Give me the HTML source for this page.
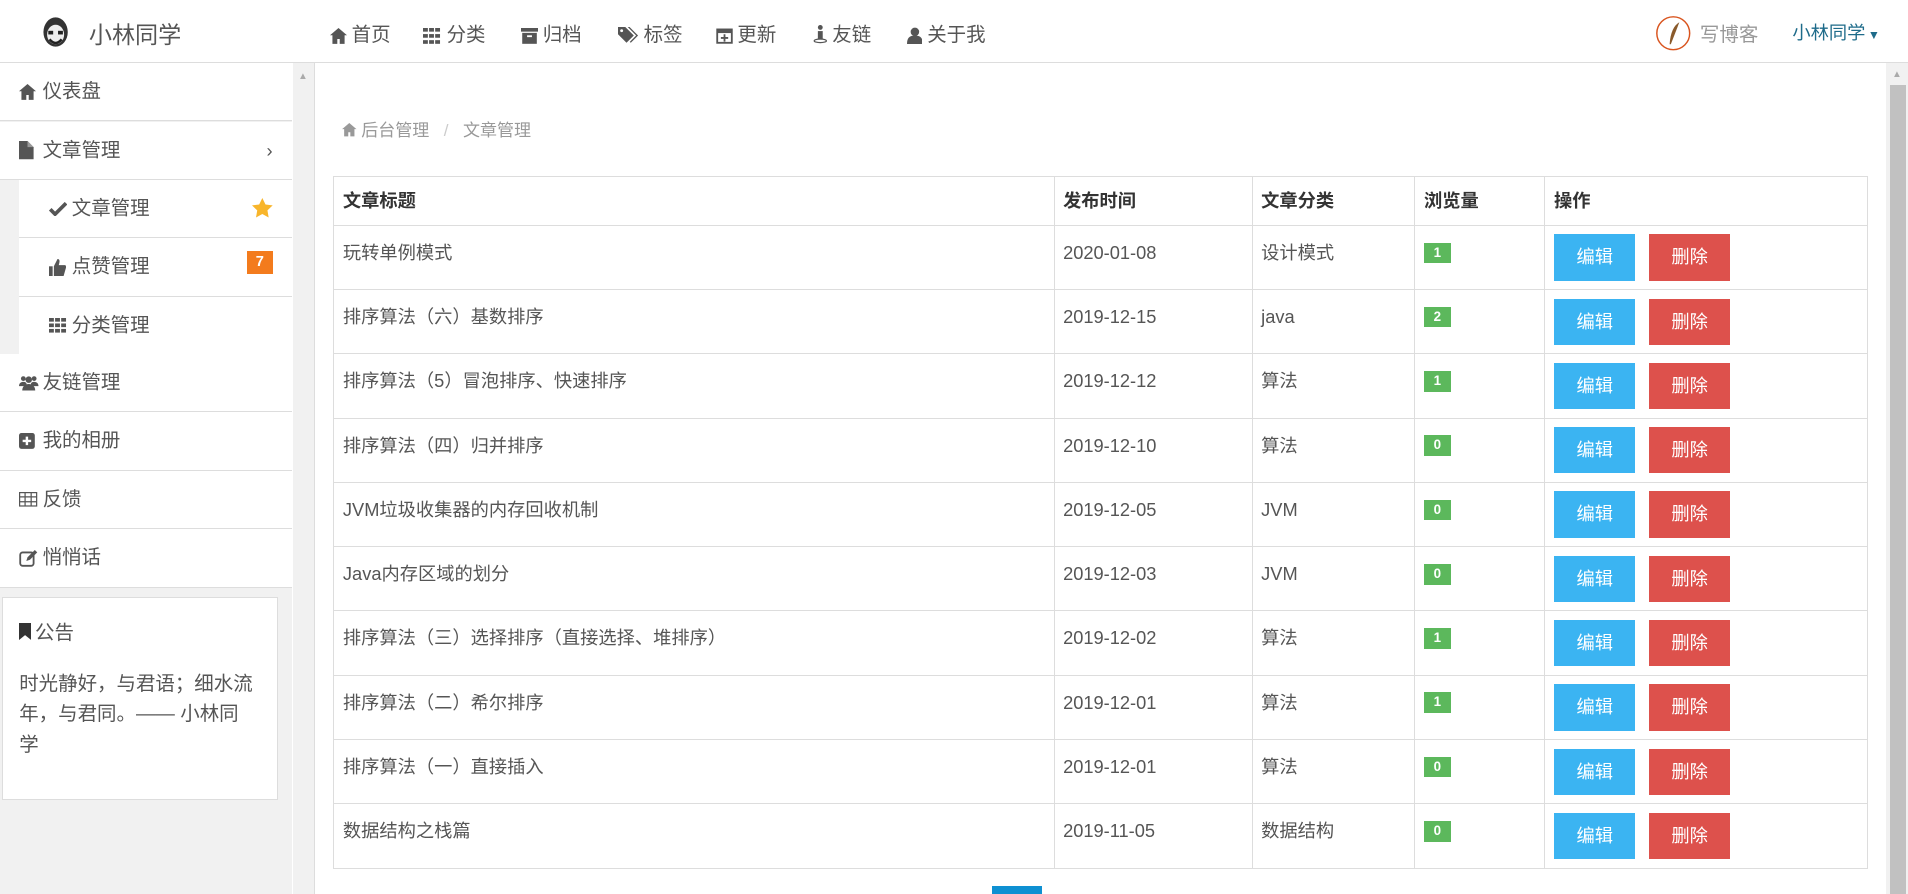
<!DOCTYPE html>
<html><head><meta charset="utf-8">
<style>
html,body{margin:0;padding:0;overflow:hidden;}
body{width:1908px;height:894px;background:#fff;}
#w{zoom:1.21684;width:1568px;height:735px;position:relative;overflow:hidden;font-family:"Liberation Sans","Noto Sans CJK SC",sans-serif;color:#555;}
.a{position:absolute;}
.hdr{left:0;top:0;width:1568px;height:51px;border-bottom:1px solid #ddd;background:#fff;}
.nav{top:15px;font-size:16px;color:#555;white-space:nowrap;}
.nav svg{vertical-align:-2px;margin-right:4px;}
.side{left:0;top:52px;width:240px;height:683px;background:#f1f1f1;}
.it{position:absolute;left:0;width:240px;height:47px;border-bottom:1px solid #ddd;background:#fff;font-size:16px;line-height:47px;white-space:nowrap;}
.ic{display:inline-block;width:19px;margin-left:16px;vertical-align:middle;line-height:0;}
.ic svg{vertical-align:middle;}
.it .t{vertical-align:middle;}
.sub{left:16px;width:224px;}
.sub .ic{margin-left:24px;}
.main{left:258px;top:52px;width:1292px;height:683px;border-left:1px solid #ddd;background:#fff;}
table{position:absolute;left:274px;top:145px;border-collapse:collapse;font-size:15px;color:#555;}
td,th{border:1px solid #ddd;padding:0 7px;text-align:left;vertical-align:top;}
th{height:39px;line-height:39px;font-weight:bold;color:#333;}
td{height:52px;line-height:44px;}
.bd{display:inline-block;background:#5cb85c;color:#fff;font-size:11px;font-weight:bold;width:22px;height:17px;line-height:17px;text-align:center;vertical-align:middle;margin-top:-2px;}
.b{display:inline-block;width:67px;height:38px;line-height:38px;text-align:center;color:#fff;font-size:15px;margin-top:7px;}
.e{background:#3bb4f2;}.d{background:#dd514c;margin-left:11px;}
</style></head><body><div id="w">
<div class="a hdr">
 <svg class="a" style="left:34px;top:12px" width="24" height="28" viewBox="0 0 24 28"><ellipse cx="12" cy="14" rx="10" ry="12" fill="#333"/><ellipse cx="12" cy="16" rx="7" ry="8" fill="#eee"/><rect x="6" y="13" width="4" height="3" fill="#222"/><rect x="14" y="13" width="4" height="3" fill="#222"/><path d="M7 20 Q12 26 17 20" stroke="#222" stroke-width="2" fill="none"/></svg>
 <div class="a" style="left:73px;top:13px;font-size:19px;color:#555">小林同学</div>
 <div class="a nav" style="left:271px"><svg width="14" height="13" viewBox="0 0 14 13"><path d="M7 0L0 6h2v7h4V9h2v4h4V6h2z" fill="#555"/></svg>首页</div>
 <div class="a nav" style="left:348px"><svg width="15" height="13" viewBox="0 0 15 13"><g fill="#555"><rect x="0" y="0" width="4" height="3"/><rect x="5" y="0" width="4" height="3"/><rect x="10" y="0" width="4" height="3"/><rect x="0" y="5" width="4" height="3"/><rect x="5" y="5" width="4" height="3"/><rect x="10" y="5" width="4" height="3"/><rect x="0" y="10" width="4" height="3"/><rect x="5" y="10" width="4" height="3"/><rect x="10" y="10" width="4" height="3"/></g></svg>分类</div>
 <div class="a nav" style="left:428px"><svg width="14" height="13" viewBox="0 0 14 13"><rect x="0" y="0" width="14" height="3" fill="#555"/><rect x="1" y="4" width="12" height="9" fill="#555"/><rect x="5" y="6" width="4" height="1.5" fill="#fff"/></svg>归档</div>
 <div class="a nav" style="left:508px"><svg width="17" height="14" viewBox="0 0 17 14"><path d="M0 0h6l7 7-6 6-7-7z" fill="#555"/><circle cx="3" cy="3" r="1.2" fill="#fff"/><path d="M8 0h1.5l7 7-6 6-.8-.8 5.2-5.2z" fill="#555"/></svg>标签</div>
 <div class="a nav" style="left:588px"><svg width="14" height="14" viewBox="0 0 14 14"><rect x="1" y="2" width="12" height="11" fill="none" stroke="#555" stroke-width="1.5"/><rect x="1" y="2" width="12" height="3" fill="#555"/><path d="M7 6v6M4 9h6" stroke="#555" stroke-width="1.5"/></svg>更新</div>
 <div class="a nav" style="left:668px"><svg width="12" height="15" viewBox="0 0 12 15"><circle cx="6" cy="2" r="2" fill="#555"/><rect x="4" y="5" width="4" height="7" fill="#555"/><ellipse cx="6" cy="13" rx="5" ry="1.5" fill="none" stroke="#555"/></svg>友链</div>
 <div class="a nav" style="left:745px"><svg width="13" height="14" viewBox="0 0 13 14"><circle cx="6.5" cy="4" r="3.5" fill="#555"/><path d="M0 14c0-5 2-7 6.5-7S13 9 13 14z" fill="#555"/></svg>关于我</div>
 <svg class="a" style="left:1360px;top:12px" width="30" height="30" viewBox="0 0 30 30"><circle cx="15" cy="15" r="13.5" fill="#fff" stroke="#d9541e" stroke-width="1.2"/><path d="M12 24 Q13 10 20 6 Q17 14 13 24z" fill="#8a5a2b"/></svg>
 <div class="a" style="left:1397px;top:15px;font-size:16px;color:#999">写博客</div>
 <div class="a" style="left:1473px;top:16px;font-size:15px;color:#1e6b8a">小林同学<span style="font-size:10px;margin-left:2px">▼</span></div>
</div>
<div class="a side">
 <div class="it" style="top:0"><span class="ic"><svg width="14" height="13" viewBox="0 0 14 13"><path d="M7 0L0 6h2v7h4V9h2v4h4V6h2z" fill="#555"/></svg></span><span class="t">仪表盘</span></div>
 <div class="it" style="top:48px"><span class="ic"><svg width="12" height="15" viewBox="0 0 12 15"><path d="M0 0h7l5 5v10H0z" fill="#555"/><path d="M7 0v5h5" fill="#999"/></svg></span><span class="t">文章管理</span><span style="position:absolute;right:16px;font-size:15px">›</span></div>
 <div class="it sub" style="top:96px"><span class="ic"><svg width="15" height="12" viewBox="0 0 15 12"><path d="M1 6l4 4 9-9" stroke="#555" stroke-width="3" fill="none"/></svg></span><span class="t">文章管理</span><svg style="position:absolute;right:16px;top:15px" width="17" height="16" viewBox="0 0 17 16"><path d="M8.5 0l2.6 5.3 5.9.8-4.3 4.1 1 5.8-5.2-2.8-5.2 2.8 1-5.8L0 6.1l5.9-.8z" fill="#f8b52b"/></svg></div>
 <div class="it sub" style="top:144px"><span class="ic"><svg width="14" height="14" viewBox="0 0 14 14"><rect x="0" y="6" width="3" height="8" fill="#555"/><path d="M4 6l3-6c2 0 2 2 1 5h5c1 0 1 1 1 2l-2 7H4z" fill="#555"/></svg></span><span class="t">点赞管理</span><span style="position:absolute;right:16px;top:10px;background:#f37b1d;color:#fff;font-size:12px;font-weight:bold;width:21px;height:19px;line-height:19px;text-align:center">7</span></div>
 <div class="it sub" style="top:192px"><span class="ic"><svg width="15" height="12" viewBox="0 0 15 12"><g fill="#555"><rect x="0" y="0" width="4" height="3"/><rect x="5" y="0" width="4" height="3"/><rect x="10" y="0" width="4" height="3"/><rect x="0" y="4.5" width="4" height="3"/><rect x="5" y="4.5" width="4" height="3"/><rect x="10" y="4.5" width="4" height="3"/><rect x="0" y="9" width="4" height="3"/><rect x="5" y="9" width="4" height="3"/><rect x="10" y="9" width="4" height="3"/></g></svg></span><span class="t">分类管理</span></div>
 <div class="it" style="top:239px"><span class="ic"><svg width="16" height="13" viewBox="0 0 18 14"><g fill="#555"><circle cx="4" cy="3" r="2.2"/><circle cx="14" cy="3" r="2.2"/><circle cx="9" cy="4" r="3"/><path d="M0 10c0-3 2-4 4-4s3 1 3 2v2z"/><path d="M18 10c0-3-2-4-4-4s-3 1-3 2v2z"/><path d="M3 14c0-4 3-6 6-6s6 2 6 6z"/></g></svg></span><span class="t">友链管理</span></div>
 <div class="it" style="top:287px"><span class="ic"><svg width="13" height="13" viewBox="0 0 13 13"><rect width="13" height="13" rx="2" fill="#555"/><path d="M6.5 3v7M3 6.5h7" stroke="#fff" stroke-width="2"/></svg></span><span class="t">我的相册</span></div>
 <div class="it" style="top:335px"><span class="ic"><svg width="15" height="12" viewBox="0 0 15 12"><rect x=".5" y=".5" width="14" height="11" fill="none" stroke="#555"/><path d="M.5 4h14M.5 8h14M5 .5v11M10 .5v11" stroke="#555"/></svg></span><span class="t">反馈</span></div>
 <div class="it" style="top:383px"><span class="ic"><svg width="15" height="14" viewBox="0 0 15 14"><rect x="1" y="2" width="11" height="11" rx="2" fill="none" stroke="#555" stroke-width="1.5"/><path d="M6 9l1-3 6-6 2 2-6 6z" fill="#555"/></svg></span><span class="t">悄悄话</span></div>
 <div class="a" style="left:2px;top:439px;width:225px;height:165px;background:#fff;border:1px solid #ddd;font-size:16px;line-height:25px;">
  <div style="margin:16px 13px 0"><svg width="10" height="14" viewBox="0 0 10 14" style="vertical-align:-1px;margin-right:3px"><path d="M0 0h10v14L5 10 0 14z" fill="#333"/></svg>公告</div>
  <div style="margin:17px 13px 0;white-space:nowrap">时光静好，与君语；细水流<br>年，与君同。—— 小林同<br>学</div>
 </div>
</div>
<div class="a" style="left:241px;top:52px;width:17px;height:683px;background:#f1f1f1"></div>
<div class="a" style="left:245px;top:58px;font-size:8px;color:#aaa">▲</div>
<div class="a main"></div>
<div class="a" style="left:1550px;top:52px;width:18px;height:683px;background:#f1f1f1"></div>
<div class="a" style="left:1553px;top:70px;width:13px;height:665px;background:#c1c1c1"></div>
<div class="a" style="left:1555px;top:57px;font-size:8px;color:#aaa">▲</div>
<div class="a" style="left:281px;top:95px;font-size:14px;color:#999"><svg width="12" height="11" viewBox="0 0 14 13" style="vertical-align:-1px"><path d="M7 0L0 6h2v7h4V9h2v4h4V6h2z" fill="#999"/></svg> 后台管理 <span style="color:#ccc;margin:0 8px">/</span> 文章管理</div>
<table>
<tr><th style="width:577px">文章标题</th><th style="width:148px">发布时间</th><th style="width:119px">文章分类</th><th style="width:92px">浏览量</th><th style="width:250px">操作</th></tr>
<tr><td>玩转单例模式</td><td>2020-01-08</td><td>设计模式</td><td><span class="bd">1</span></td><td><span class="b e">编辑</span><span class="b d">删除</span></td></tr>
<tr><td>排序算法（六）基数排序</td><td>2019-12-15</td><td>java</td><td><span class="bd">2</span></td><td><span class="b e">编辑</span><span class="b d">删除</span></td></tr>
<tr><td>排序算法（5）冒泡排序、快速排序</td><td>2019-12-12</td><td>算法</td><td><span class="bd">1</span></td><td><span class="b e">编辑</span><span class="b d">删除</span></td></tr>
<tr><td>排序算法（四）归并排序</td><td>2019-12-10</td><td>算法</td><td><span class="bd">0</span></td><td><span class="b e">编辑</span><span class="b d">删除</span></td></tr>
<tr><td>JVM垃圾收集器的内存回收机制</td><td>2019-12-05</td><td>JVM</td><td><span class="bd">0</span></td><td><span class="b e">编辑</span><span class="b d">删除</span></td></tr>
<tr><td>Java内存区域的划分</td><td>2019-12-03</td><td>JVM</td><td><span class="bd">0</span></td><td><span class="b e">编辑</span><span class="b d">删除</span></td></tr>
<tr><td>排序算法（三）选择排序（直接选择、堆排序）</td><td>2019-12-02</td><td>算法</td><td><span class="bd">1</span></td><td><span class="b e">编辑</span><span class="b d">删除</span></td></tr>
<tr><td>排序算法（二）希尔排序</td><td>2019-12-01</td><td>算法</td><td><span class="bd">1</span></td><td><span class="b e">编辑</span><span class="b d">删除</span></td></tr>
<tr><td>排序算法（一）直接插入</td><td>2019-12-01</td><td>算法</td><td><span class="bd">0</span></td><td><span class="b e">编辑</span><span class="b d">删除</span></td></tr>
<tr><td>数据结构之栈篇</td><td>2019-11-05</td><td>数据结构</td><td><span class="bd">0</span></td><td><span class="b e">编辑</span><span class="b d">删除</span></td></tr>
</table>
<div class="a" style="left:815px;top:728px;width:41px;height:10px;background:#0e90d2"></div>
</div></body></html>
